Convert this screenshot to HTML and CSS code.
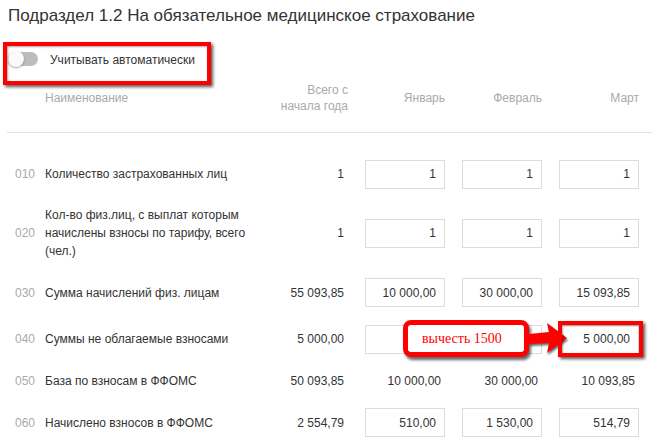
FILE: index.html
```html
<!DOCTYPE html>
<html lang="ru">
<head>
<meta charset="utf-8">
<title>Подраздел 1.2</title>
<link rel="stylesheet" href="styles.css">
</head>
<body>
<div class="page">
  <h1 class="title">Подраздел 1.2 На обязательное медицинское страхование</h1>
  <div class="auto">
    <span class="switch"><span class="knob"></span></span>
    <span class="auto-label">Учитывать автоматически</span>
  </div>
  <div class="table">
    <div class="thead">
      <div></div>
      <div class="h-name">Наименование</div>
      <div class="h-num">Всего с<br>начала года</div>
      <div class="h-num">Январь</div>
      <div class="h-num">Февраль</div>
      <div class="h-num">Март</div>
    </div>
    <div class="tbody">
      <div class="code">010</div>
      <div class="name">Количество застрахованных лиц</div>
      <div class="total">1</div>
      <input class="cell" type="text" value="1" readonly>
      <input class="cell" type="text" value="1" readonly>
      <input class="cell" type="text" value="1" readonly>

      <div class="code">020</div>
      <div class="name">Кол-во физ.лиц, с выплат которым начислены взносы по тарифу, всего (чел.)</div>
      <div class="total">1</div>
      <input class="cell" type="text" value="1" readonly>
      <input class="cell" type="text" value="1" readonly>
      <input class="cell" type="text" value="1" readonly>

      <div class="code">030</div>
      <div class="name">Сумма начислений физ. лицам</div>
      <div class="total">55 093,85</div>
      <input class="cell" type="text" value="10 000,00" readonly>
      <input class="cell" type="text" value="30 000,00" readonly>
      <input class="cell" type="text" value="15 093,85" readonly>

      <div class="code">040</div>
      <div class="name">Суммы не облагаемые взносами</div>
      <div class="total">5 000,00</div>
      <input class="cell" type="text" value="" readonly>
      <input class="cell" type="text" value="" readonly>
      <input class="cell" type="text" value="5 000,00" readonly>

      <div class="code">050</div>
      <div class="name">База по взносам в ФФОМС</div>
      <div class="total">50 093,85</div>
      <div class="plain">10 000,00</div>
      <div class="plain">30 000,00</div>
      <div class="plain">10 093,85</div>

      <div class="code">060</div>
      <div class="name">Начислено взносов в ФФОМС</div>
      <div class="total">2 554,79</div>
      <input class="cell" type="text" value="510,00" readonly>
      <input class="cell" type="text" value="1 530,00" readonly>
      <input class="cell" type="text" value="514,79" readonly>
    </div>
  </div>

  <div class="mark mark-toggle"></div>
  <div class="callout">вычесть 1500</div>
  <svg class="arrow" width="46" height="34" viewBox="0 0 46 34">
    <polygon points="2,12 22,10 20,1 40,16 20,31 22,21 2,22" fill="#ff0000"/>
  </svg>
  <div class="mark mark-march"></div>
</div>
</body>
</html>
```

FILE: styles.css
```css
* { box-sizing: border-box; }

html, body {
  margin: 0;
  padding: 0;
  background: #ffffff;
}

body {
  font-family: "Liberation Sans", Arial, sans-serif;
  font-size: 12px;
  color: #333333;
}

.page {
  position: relative;
  width: 652px;
  height: 445px;
  overflow: hidden;
}

.title {
  margin: 0;
  padding: 6px 0 0 8px;
  font-size: 17px;
  line-height: 19px;
  font-weight: normal;
  color: #333333;
}

.auto {
  display: flex;
  align-items: center;
  gap: 12px;
  height: 20px;
  margin-top: 24px;
  padding-left: 8px;
}

.switch {
  position: relative;
  width: 30px;
  height: 14px;
  border-radius: 7px;
  background: #bdbdbd;
  flex: none;
}

.knob {
  position: absolute;
  left: 0;
  top: -1px;
  width: 16px;
  height: 16px;
  border-radius: 50%;
  background: #fafafa;
  box-shadow: 0 1px 2px rgba(0, 0, 0, 0.35);
}

.auto-label {
  font-size: 12px;
  line-height: 20px;
  color: #333333;
  padding-top: 2px;
}

.table {
  margin-left: 7px;
  margin-top: 19px;
}

.thead,
.tbody {
  display: grid;
  grid-template-columns: 30px 220px 83px 97px 97px 97px;
  padding-left: 8px;
  align-items: center;
}

.thead {
  height: 45px;
  padding-bottom: 24px;
  grid-template-rows: 20px;
  border-bottom: 1px solid #e3e3e3;
  color: #aaaaaa;
  line-height: 16px;
}

.h-num {
  text-align: right;
}

.tbody {
  padding-top: 12px;
  grid-template-rows: 58px 60px 59px 34px 50px 33px;
}

.code {
  color: #aaaaaa;
}

.name {
  line-height: 18px;
  padding-right: 6px;
  color: #333333;
}

.total {
  text-align: right;
  padding-right: 4px;
}

.plain {
  text-align: right;
  padding-right: 4px;
}

.cell {
  justify-self: end;
  width: 80px;
  height: 29px;
  margin: 0;
  padding: 0 8px 0 4px;
  border: 1px solid #dcdcdc;
  border-radius: 0;
  background: #ffffff;
  font-family: "Liberation Sans", Arial, sans-serif;
  font-size: 12px;
  color: #333333;
  text-align: right;
  outline: none;
}

.mark {
  position: absolute;
  border: 4px solid #ff0000;
  box-shadow: 2px 2px 3px rgba(0, 0, 0, 0.65), inset 1px 1px 2px rgba(0, 0, 0, 0.35);
}

.mark-toggle {
  left: 3px;
  top: 42px;
  width: 208px;
  height: 43px;
}

.mark-march {
  left: 558px;
  top: 321px;
  width: 85px;
  height: 36px;
}

.callout {
  position: absolute;
  left: 403px;
  top: 320px;
  width: 126px;
  height: 37px;
  padding-left: 14px;
  border: 5px solid #ff0000;
  border-radius: 8px;
  background: #ffffff;
  box-shadow: 2px 3px 3px rgba(0, 0, 0, 0.6);
  font-family: "Liberation Serif", "Times New Roman", serif;
  font-size: 14px;
  line-height: 27px;
  color: #ff0000;
}

.arrow {
  position: absolute;
  left: 527px;
  top: 322px;
  filter: drop-shadow(1px 2px 1px rgba(0, 0, 0, 0.6));
}
```
